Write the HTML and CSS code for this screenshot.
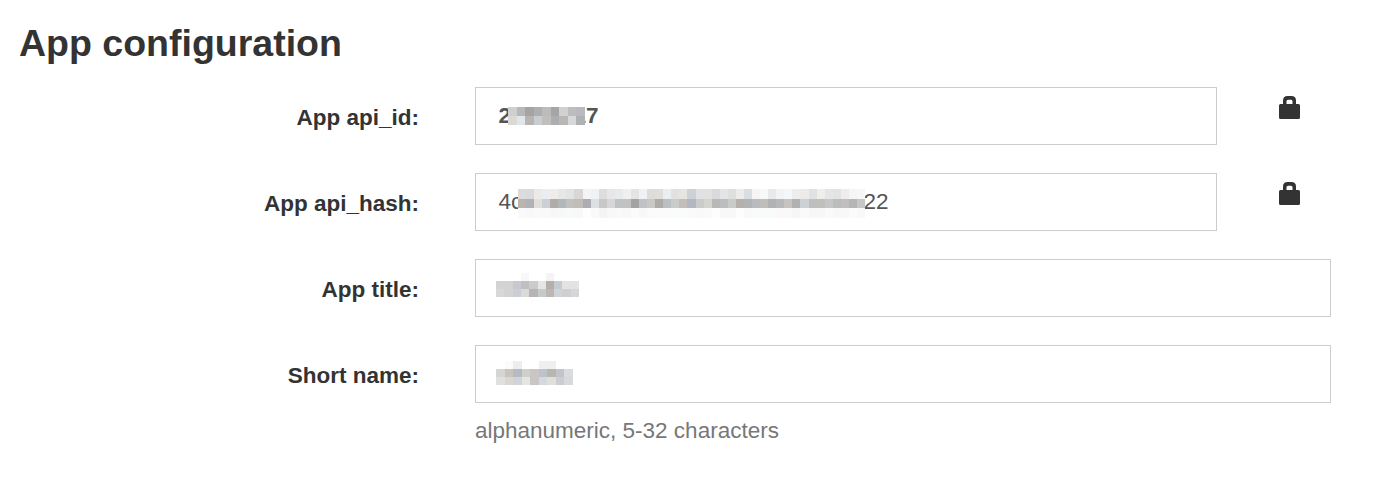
FILE: index.html
```
<!DOCTYPE html>
<html lang="en">
<head>
  <meta charset="UTF-8" />
  <meta name="viewport" content="width=device-width, initial-scale=1.0"/>
  <title>App configuration</title>
  <link rel="stylesheet" href="styles.css">
</head>
<body>

  <h2 class="page-title">App configuration</h2>

  <div class="app-form">
    <div class="form-group">
      <div class="form-label">App api_id:</div>
      <div class="form-field locked">
        <div class="form-input"><strong>2</strong><svg class="mosaic mosaic-id" data-mosaic="id"></svg><strong>17</strong></div>
      </div>
      <svg class="lock" viewBox="0 0 21 23">
        <path fill-rule="evenodd" d="M4 8V4.500Q4 0 8.500 0h4Q17 0 17 4.500V8h2.500q1.500 0 1.500 1.500v12q0 1.500-1.500 1.500h-18Q0 23 0 21.500v-12Q0 8 1.500 8zM7.500 8h6V5.300q0-1.500-1.500-1.500H9q-1.500 0-1.500 1.500z"/>
      </svg>
    </div>

    <div class="form-group">
      <div class="form-label">App api_hash:</div>
      <div class="form-field locked">
        <div class="form-input"><span>4c</span><svg class="mosaic mosaic-hash" data-mosaic="hash"></svg><span>22</span></div>
      </div>
      <svg class="lock" viewBox="0 0 21 23">
        <path fill-rule="evenodd" d="M4 8V4.500Q4 0 8.500 0h4Q17 0 17 4.500V8h2.500q1.500 0 1.500 1.500v12q0 1.500-1.500 1.500h-18Q0 23 0 21.500v-12Q0 8 1.500 8zM7.500 8h6V5.300q0-1.500-1.500-1.500H9q-1.500 0-1.500 1.500z"/>
      </svg>
    </div>

    <div class="form-group">
      <div class="form-label">App title:</div>
      <div class="form-field">
        <div class="form-input"><svg class="mosaic mosaic-title" data-mosaic="title"></svg></div>
      </div>
    </div>

    <div class="form-group">
      <div class="form-label">Short name:</div>
      <div class="form-field">
        <div class="form-input"><svg class="mosaic mosaic-name" data-mosaic="name"></svg></div>
        <p class="help-block">alphanumeric, 5-32 characters</p>
      </div>
    </div>
  </div>

  <script src="mosaic.js"></script>
</body>
</html>
```
FILE: styles.css
```
* {
  box-sizing: border-box;
  margin: 0;
  padding: 0;
}

body {
  font-family: "Liberation Sans", Arial, sans-serif;
  font-size: 22.5px;
  line-height: 32px;
  color: #333;
  background-color: #fff;
  padding: 19px 43px 0 19px;
}

.page-title {
  font-size: 37.5px;
  line-height: 48px;
  margin-bottom: 20px;
}

.app-form {
  display: flex;
  flex-direction: column;
  gap: 28px;
}

.form-group {
  display: flex;
  align-items: flex-start;
}

.form-label {
  width: 400px;
  margin-right: 56px;
  padding-top: 15px;
  font-weight: bold;
  text-align: right;
}

.form-field {
  width: 856px;
}

.form-field.locked {
  width: 742px;
}

.form-input {
  display: flex;
  align-items: flex-start;
  height: 58px;
  padding: 12px 22.5px;
  border: 1px solid #ccc;
  color: #555;
}

.help-block {
  padding-top: 12px;
  color: #777;
}

.lock {
  width: 21px;
  height: 23px;
  margin: 9px 0 0 62px;
  fill: #333;
}

/* pixelated cover over private values */
.mosaic {
  position: relative;
  flex: none;
}

.mosaic-id {
  width: 77px;
  height: 18px;
  margin: 7px -11.5px 0 -3px;
}

.mosaic-hash {
  width: 347px;
  height: 29px;
  margin: 3px -1.5px 0 -4.200px;
}

.mosaic-title {
  width: 83px;
  height: 24px;
  margin: 1px 0 0 -2.5px;
}

.mosaic-name {
  width: 77px;
  height: 24px;
  margin: 3px 0 0 -2.5px;
}
```
FILE: mosaic.js
```
// one string per row, one hex colour per cell
const mosaics = {
  id: [
    'cdd0d2 b6b8ba a8a3a0 aeafb0 bdbbb9 a3a5a7 d0d2d1 bcbdc0 b8babd',
    'dcd8d4 e1e6ea b8b4b1 c9cdd1 c1bfbd adaeb0 b9b7b4 d6d8da b0b1b3'
  ],
  hash: [
    'dddcdb d8dadd ebeae9 e9eef2 eeedeb e7e7e7 e2e4e3 d8d7d5 f4f4f4 eff2f5 dedddc e6e6e8 e9eaec f0f0f0 e4e4e4 eff1f4 dddcda dededd e9eef1 e2e1e0 e7e5e2 cdd0d4 dfe1e3 e2e1e0 d9dadb e2e4e8 dededd eeecea dadde1 f6f5f3 f6f8fa e7e9eb f5f3f1 f4f7f9 ededec ecebea dfe1e3 efeeed e5e5e5 e2e3e4 eeedec f5f5f5 f7f7f7',
    'bab4af b0b2b5 e0dfda cbd0d4 b1aca8 b2b7ba c1c1bf c1beb9 abadb2 dddfe2 c8c8c6 d8d7d5 c0c3c3 c4c2c0 a2a3a4 c0c2c6 c9c9c4 aeaaa6 babfc2 caccca c4beb9 b1b8c1 c9cccb d5d5d0 b8b8b8 bbbdbf cacac7 b6b0ab b1b3b7 b9bbbe c0beb8 b0b2b4 b7b8ba c6c3c0 b2b0b0 cdd1d5 bfc0be c0bfbc c5c6c7 bebcba c0bebe b5b5b7 c5c6c7',
    'fafafa f8f8f8 f9faf9 f8f9f9 f7f7f7 f7f8f8 f8f9f9 f8f8f8 fefefc f9f9f9 f4f4f4 f8f8f8 f8f9f9 f7f7f7 fbfbfa f8f8f7 fafafa fbfbf9 fafbfb fafbfb fafbfb f9fafa f8f9f8 f9faf9 fdfdfd f9f8f8 f8f8f8 fdfdfb f8f9f9 f9fafa f9fafa f9fafa faf9f7 f9f9f9 f6f6f6 fafafa f7f7f7 f7f7f7 fafafa f8f8f8 f8f8f8 fbfbfb f8f8f8'
  ],
  title: [
    'ffffff ffffff ffffff f8f8f8 ffffff ffffff f4f4f4 fdfefe ffffff ffffff',
    'd4d3d1 d4d3d1 c6c9cf c0bfbd c9cbcf e3e6e4 b5afab c5cbd0 e3e3e3 e3e3e3',
    'dad8d6 d3d3d4 cbced2 dadbd8 b7b5b4 c4c9ca bcb7b4 d1d3da cfcfd0 d4d6d9'
  ],
  name: [
    'ffffff fbfbfa ebedf0 ffffff ffffff efefef efefef ffffff ffffff',
    'd6d5d4 c9c3bb b5bbc3 cfd0cb cbc6c4 bcc3cb b9b5af c1c4ca dadbdc',
    'e0e0de d8d7d5 d0d4da e4e6e1 cbc6c4 d4d9e0 dfdfdb cccdd1 d8d9dc'
  ]
};

document.querySelectorAll('.mosaic').forEach(svg => {
  const rows = mosaics[svg.dataset.mosaic].map(row => row.split(' '));
  const cols = rows[0].length;
  svg.setAttribute('viewBox', '0 0 ' + cols + ' ' + rows.length);
  svg.setAttribute('preserveAspectRatio', 'none');
  svg.setAttribute('shape-rendering', 'crispEdges');
  rows.forEach((row, y) => {
    row.forEach((color, x) => {
      const cell = document.createElementNS('http://www.w3.org/2000/svg', 'rect');
      cell.setAttribute('x', x);
      cell.setAttribute('y', y);
      cell.setAttribute('width', 1);
      cell.setAttribute('height', 1);
      cell.setAttribute('fill', '#' + color);
      svg.appendChild(cell);
    });
  });
});
```
